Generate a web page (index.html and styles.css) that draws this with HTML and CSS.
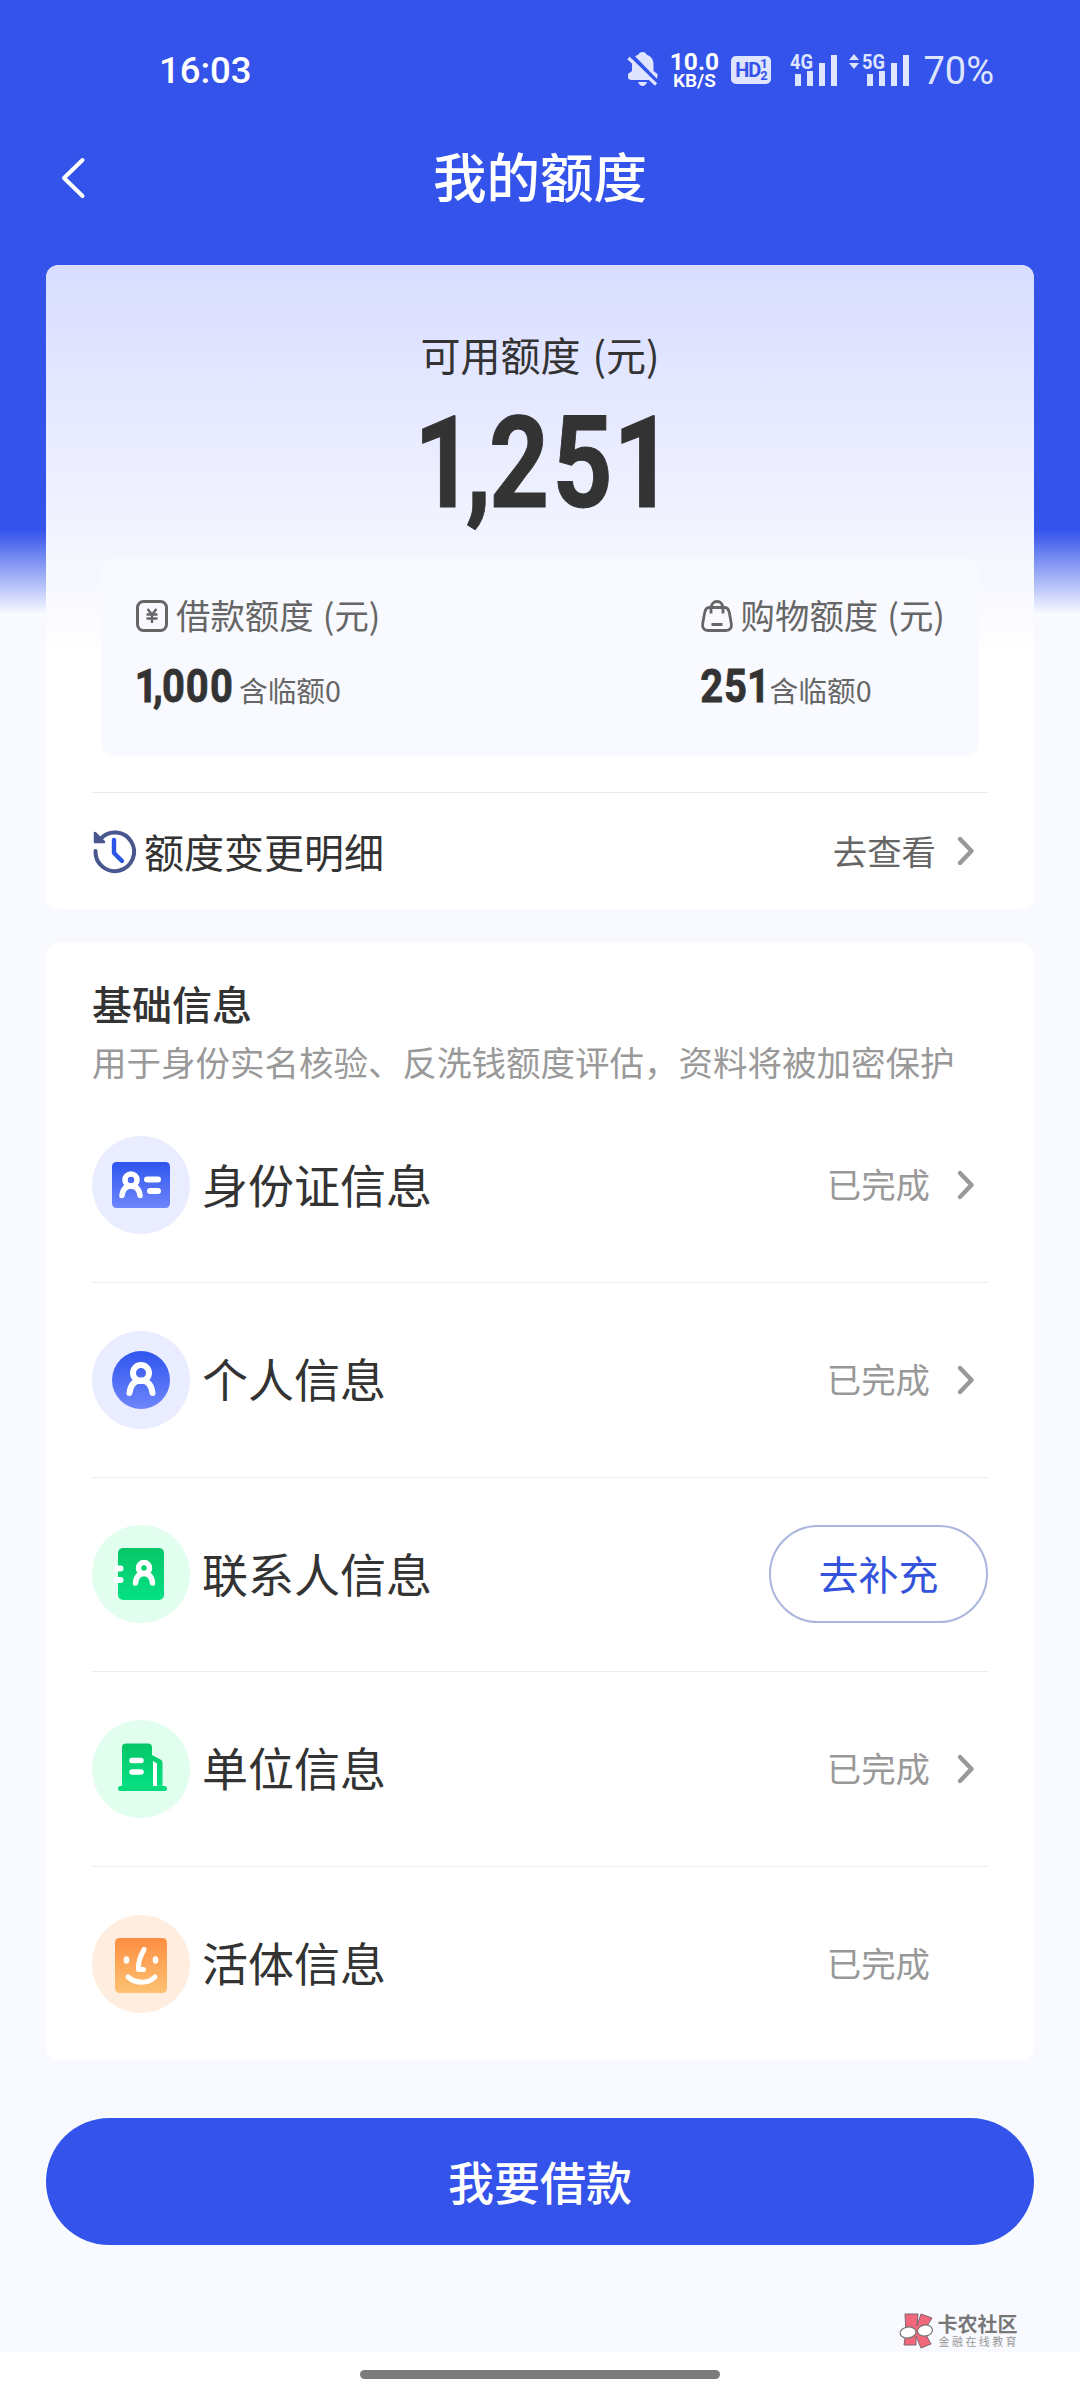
FILE: index.html
```html
<!DOCTYPE html>
<html lang="zh-CN">
<head>
<meta charset="utf-8">
<title>我的额度</title>
<link rel="stylesheet" href="styles.css">
</head>
<body>
<svg width="0" height="0" class="defs">
  <defs>
    <linearGradient id="blue" x1="0" y1="0" x2="0" y2="1"><stop offset="0" stop-color="#2f55ee"/><stop offset="1" stop-color="#6e86fc"/></linearGradient>
    <linearGradient id="green" x1="0" y1="0" x2="0" y2="1"><stop offset="0" stop-color="#06c667"/><stop offset="1" stop-color="#05e184"/></linearGradient>
    <linearGradient id="orange" x1="0" y1="0" x2="0" y2="1"><stop offset="0" stop-color="#fe8e42"/><stop offset="1" stop-color="#fdc272"/></linearGradient>
    <symbol id="chevron" viewBox="0 0 18 30"><path d="M3 3 14.500 15 3 27" fill="none" stroke="#999" stroke-width="4.400" stroke-linecap="round" stroke-linejoin="round"/></symbol>
  </defs>
</svg>
<div class="page">
  <header class="top">
    <div class="statusbar">
      <span class="time">16:03</span>
      <div class="indicators">
        <svg class="bell" width="32" height="34" viewBox="0 0 32 34"><path d="M5 28h22c2.500 0 3.500-1.500 3.500-4v-2l-4-3v-7c0-5-3-8-7-9.500C19 1 17.500 0 15.500 0S12 1 11.500 2.500C7 4 5 7 5 12v7L1 22v3c0 2 1 3 4 3z" fill="#dfe4ff"/><path d="M11 30h9c-.8 2.500-2.500 4-4.500 4S12 32.500 11 30z" fill="#dfe4ff"/><path d="M3 2 33 33" stroke="#3453eb" stroke-width="4"/><path d="M0 3.500V10l4 3V7z" fill="#3453eb"/><path d="M1.500 6 29 32.500" stroke="#dfe4ff" stroke-width="3.200"/></svg>
        <div class="speed"><span class="rate">10.0</span><span class="unit">KB/S</span></div>
        <div class="hd"><span class="hd-label">HD</span><span class="hd-nums"><i>1</i><i>2</i></span></div>
        <svg class="signal4" width="48" height="34" viewBox="0 0 48 34"><text class="net" x="0" y="17" textLength="23" lengthAdjust="spacingAndGlyphs">4G</text><path d="M5 22h6v12H5zM17 19h6v15h-6zM29 11h6v23h-6zM41 3h6v31h-6z" fill="#dfe4ff"/></svg>
        <svg class="signal5" width="61" height="34" viewBox="0 0 61 34"><path d="M0 8 5 2 10 8zM0 11h10L5 17z" fill="#dfe4ff"/><text class="net" x="13" y="17" textLength="23" lengthAdjust="spacingAndGlyphs">5G</text><path d="M18 22h6v12h-6zM30 19h6v15h-6zM42 11h6v23h-6zM54 3h6v31h-6z" fill="#dfe4ff"/></svg>
        <span class="battery">70%</span>
      </div>
    </div>
    <div class="navbar">
      <svg class="back" width="26" height="42" viewBox="0 0 26 42"><path d="M22.500 3 4 21 22.500 39" fill="none" stroke="#fff" stroke-width="4" stroke-linecap="round" stroke-linejoin="round"/></svg>
      <h1>我的额度</h1>
    </div>
  </header>

  <main>
    <section class="card quota">
      <p class="quota-label">可用额度 (元)</p>
      <svg class="total" width="244" height="110" viewBox="0 0 244 110"><text transform="scale(.82 1)" x="-5 58 86.500 164 238" y="96">1,251</text></svg>
      <div class="split">
        <div class="part">
          <div class="part-name"><svg width="32" height="32" viewBox="0 0 32 32" fill="none" stroke="#666"><rect x="1.500" y="1.500" width="29" height="29" rx="6" stroke-width="3"/><path d="m11.500 9 4.500 5.500L20.500 9M16 14v9M10.500 14.500h11M10.500 18.500h11" stroke-width="2.400"/></svg><span>借款额度 (元)</span></div>
          <div class="part-value"><svg width="97" height="44" viewBox="0 0 97 44"><text transform="scale(.85 1)" x="-1.400 20 30.500 58.500 87" y="35">1,000</text></svg><span>含临额0</span></div>
        </div>
        <div class="part">
          <div class="part-name"><svg width="32" height="32" viewBox="0 0 32 32" fill="none" stroke="#666"><path d="M8 7.500h16c2.500 0 3.500 1.500 4.300 5l2 11c.8 4.500-1.500 7-5.300 7H7c-3.800 0-6.100-2.500-5.300-7l2-11c.8-3.500 1.800-5 4.300-5z" stroke-width="2.800"/><path d="M10 13.500V8.500C10 4 12.500 1.500 16 1.500s6 2.500 6 7v5M10.500 24.500h11" stroke-width="2.800"/></svg><span>购物额度 (元)</span></div>
          <div class="part-value"><svg width="63" height="44" viewBox="0 0 63 44"><text transform="scale(.85 1)" x="-1 27 54" y="35">251</text></svg><span>含临额0</span></div>
        </div>
      </div>
      <div class="history">
        <svg width="44" height="44" viewBox="0 0 44 44" fill="none"><path d="M3.500 22A19.300 19.300 0 1 0 8.500 9.800" stroke="#48588f" stroke-width="4" stroke-linecap="round"/><path d="M3 4v9h9z" fill="#48588f" stroke="#48588f" stroke-width="2.500" stroke-linejoin="round"/><path d="M22 11v13l8 8" stroke="#2c55e8" stroke-width="4.400" stroke-linecap="round" stroke-linejoin="round"/></svg>
        <span class="history-name">额度变更明细</span>
        <span class="history-go">去查看</span>
        <svg class="chev" width="18" height="30"><use href="#chevron"/></svg>
      </div>
    </section>

    <section class="card info">
      <h2>基础信息</h2>
      <p class="hint">用于身份实名核验、反洗钱额度评估，资料将被加密保护</p>
      <ul>
        <li>
          <svg class="ico" viewBox="0 0 98 98" fill="none" stroke="#fff" stroke-linecap="round"><circle cx="49" cy="49" r="49" fill="#e9edff" stroke="none"/><rect x="20" y="26" width="58" height="46" rx="4.500" fill="url(#blue)" stroke="none"/><circle cx="39" cy="44" r="6" stroke-width="5.500"/><path d="M30 59.500c.8-6 4-9.500 9-9.500s8.200 3.500 9 9.500" stroke-width="5.500"/><path d="M55 43.500h11M58 55h8" stroke-width="6"/></svg>
          <span class="name">身份证信息</span><span class="state">已完成</span><svg class="chev" width="18" height="30"><use href="#chevron"/></svg>
        </li>
        <li>
          <svg class="ico" viewBox="0 0 98 98" fill="none" stroke="#fff" stroke-linecap="round"><circle cx="49" cy="49" r="49" fill="#e9edff" stroke="none"/><circle cx="49" cy="49" r="29" fill="url(#blue)" stroke="none"/><circle cx="49" cy="42" r="8" stroke-width="6"/><path d="M37.500 62c1-8 5-12.500 11.500-12.500S59.500 54 60.500 62" stroke-width="6"/></svg>
          <span class="name">个人信息</span><span class="state">已完成</span><svg class="chev" width="18" height="30"><use href="#chevron"/></svg>
        </li>
        <li>
          <svg class="ico" viewBox="0 0 98 98" fill="none" stroke="#fff" stroke-linecap="round"><circle cx="49" cy="49" r="49" fill="#e1feee" stroke="none"/><rect x="26" y="23" width="46" height="52" rx="5" fill="url(#green)" stroke="none"/><circle cx="52" cy="43" r="5.500" stroke-width="5.500"/><path d="M43.500 58c.6-5.500 3.300-9.500 8.500-9.500s7.900 4 8.500 9.500" stroke-width="5.500"/><path d="M24.500 43.500h4M24.500 55h4" stroke-width="6"/></svg>
          <span class="name">联系人信息</span><button class="fill">去补充</button>
        </li>
        <li>
          <svg class="ico" viewBox="0 0 98 98" fill="none" stroke-linecap="round"><circle cx="49" cy="49" r="49" fill="#e1feee"/><path d="M30 69V27.500a4 4 0 0 1 4-4H56a4 4 0 0 1 4 4V35l8.500 4.500a3.500 3.500 0 0 1 2 3.200V69z" fill="url(#green)"/><path d="M28.500 68.500h44" stroke="#05da7d" stroke-width="5"/><path d="M61 41v25h4V43.500z" fill="#fff"/><path d="M40 40.500h9M40 52h9" stroke="#fff" stroke-width="5.500"/></svg>
          <span class="name">单位信息</span><span class="state">已完成</span><svg class="chev" width="18" height="30"><use href="#chevron"/></svg>
        </li>
        <li>
          <svg class="ico" viewBox="0 0 98 98" fill="none" stroke="#fff" stroke-linecap="round" stroke-linejoin="round"><circle cx="49" cy="49" r="49" fill="#ffeedf" stroke="none"/><rect x="23" y="23" width="52" height="55" rx="4.500" fill="url(#orange)" stroke="none"/><path d="M34.500 44v2M63.500 44v2" stroke-width="5.500"/><path d="M52 34.500c-4 7-6 14-5.500 20h5M36 62c8 7 20 7 27 0" stroke-width="5"/></svg>
          <span class="name">活体信息</span><span class="state last">已完成</span>
        </li>
      </ul>
    </section>

    <button class="borrow">我要借款</button>

    <div class="brand">
      <svg width="36" height="36" viewBox="0 0 36 36"><path d="M6 1h13l-1 12 4-12 11 4-8 13 7 13-10 4-5-12v9H5l2-13z" fill="#f26779" stroke="#7c6470" stroke-width="1"/><ellipse cx="9" cy="19.500" rx="8" ry="5.500" fill="#fff" stroke="#777" stroke-width="1.200" transform="rotate(-8 9 19.500)"/><ellipse cx="26" cy="17.500" rx="7.500" ry="5.500" fill="#fff" stroke="#777" stroke-width="1.200" transform="rotate(-8 26 17.500)"/></svg>
      <div class="brand-text"><b>卡农社区</b><span>金融在线教育</span></div>
    </div>
  </main>
  <footer class="gesture"><span></span></footer>
</div>
</body>
</html>
```
FILE: styles.css
```css
* { box-sizing: border-box; margin: 0; padding: 0; }
body { font-family: "Noto Sans CJK SC", sans-serif; color: #333; }
.defs { position: absolute; }
svg { display: block; flex: none; overflow: visible; }
button { font: inherit; border: 0; display: block; }
ul { list-style: none; }
.page {
  width: 1080px; height: 2400px; display: flex; flex-direction: column; overflow: hidden;
  background: linear-gradient(#3453eb 0, #3453eb 530px, #f9faff 614px);
}
.top { height: 265px; color: #fff; }
.statusbar { height: 120px; padding: 48px 86px 0 159px; display: flex; justify-content: space-between; }
.time { font: 500 36.500px/45px Roboto, sans-serif; }
.indicators { display: flex; align-items: flex-start; padding-top: 4px; color: #dfe4ff; font-family: Roboto, sans-serif; }
.speed { width: 48px; margin-left: 11px; display: flex; flex-direction: column; align-items: center; color: #fff; }
.rate { font-size: 24.500px; line-height: 19px; font-weight: 700; }
.unit { font-size: 19px; line-height: 16px; margin-top: 2px; font-weight: 600; }
.hd { width: 40px; height: 28px; margin: 4px 0 0 13px; border-radius: 5px; background: #dfe4ff; color: #3453eb; display: flex; justify-content: center; align-items: center; }
.hd-label { font-size: 20px; font-weight: 700; letter-spacing: -1px; }
.hd-nums { display: flex; flex-direction: column; }
.hd-nums i { font: 700 13px/12px Roboto, sans-serif; }
.signal4 { margin-left: 19px; }
.signal5 { margin-left: 11px; }
.net { font: 700 21px Roboto, sans-serif; fill: #dfe4ff; }
.battery { font-size: 38px; line-height: 39px; margin-left: 13px; }
.navbar { height: 116px; padding: 0 60px; display: grid; grid-template-columns: 26px 1fr 26px; align-items: center; }
.back { margin-top: -1px; }
h1 { font-size: 53.500px; line-height: 64px; font-weight: 500; text-align: center; margin-top: -6px; }

main { flex: 1; padding: 0 46px; display: flex; flex-direction: column; }
.card { background: #fff; border-radius: 12px; }
.quota { height: 644px; padding: 65px 46px 0; background: linear-gradient(#d8ddff 0, #f2f4ff 270px, #fff 390px); display: flex; flex-direction: column; }
.quota-label { font-size: 40px; line-height: 48px; text-align: center; word-spacing: 3px; }
.total { align-self: center; margin-top: 33px; }
.total text { font: 700 128px Roboto, sans-serif; fill: #333; stroke: #333; stroke-width: 1px; }
.split { height: 197px; margin: 38px 9px 0; padding: 35px 34px 0 35px; border-radius: 12px; background: #f9faff; display: flex; justify-content: space-between; color: #666; }
.part-name { display: flex; align-items: center; gap: 8px; height: 44px; font-size: 34.400px; line-height: 44px; word-spacing: 1.500px; }
.part-name span { margin-top: -4px; }
.part-value { display: flex; align-items: flex-start; gap: 6px; margin-top: 29px; font-size: 28.700px; line-height: 44px; }
.part-value text { font: 700 47px Roboto, sans-serif; fill: #333; stroke: #333; stroke-width: .8px; }
.part-value span { margin-top: 1px; }
.history { height: 117px; margin-top: 36px; border-top: 1.500px solid #ebebeb; display: flex; align-items: center; padding-right: 13px; }
.history-name { font-size: 40px; margin: -1px 0 0 8px; }
.history-go { font-size: 34.400px; color: #666; margin: -3px 0 0 auto; }
.chev { margin-left: 21px; }

.info { height: 1117px; margin-top: 34px; padding: 35px 46px 0; }
h2 { font-size: 40px; line-height: 50px; font-weight: 500; }
.hint { font-size: 34.500px; line-height: 50px; margin-top: 8px; color: #999; white-space: nowrap; }
ul { margin-top: 2.500px; }
li { height: 194.500px; display: flex; align-items: center; border-bottom: 1.500px solid #eee; padding-right: 13px; }
li:last-child { border-bottom: 0; }
li .chev { margin-left: 27px; }
.ico { width: 98px; height: 98px; }
.name { font-size: 46px; line-height: 60px; margin: -5px 0 0 12px; }
.state { margin: -4px 0 0 auto; font-size: 34.400px; color: #999; }
.state.last { margin-right: 45px; }
.fill { margin-left: auto; margin-right: -13px; width: 219px; height: 98px; padding-bottom: 3px; border: 2px solid #aab6de; border-radius: 49px; background: #fff; color: #3453db; font-size: 40px; }
.borrow { width: 988px; height: 127px; margin-top: 58px; padding-bottom: 4px; border-radius: 64px; background: #3453eb; color: #fff; font-size: 46px; font-weight: 500; }
.brand { display: flex; align-self: flex-end; margin: 68px 15px 0 0; gap: 3px; color: #777; }
.brand-text { display: flex; flex-direction: column; margin-top: 1px; }
.brand b { font-size: 20px; line-height: 20px; font-weight: 700; }
.brand-text span { font-size: 11px; line-height: 14px; letter-spacing: 2.400px; color: #999; margin-left: 1px; }
.gesture { height: 48px; background: #fff; display: flex; justify-content: center; padding-top: 18px; }
.gesture span { width: 360px; height: 9px; border-radius: 5px; background: #7b7b7b; }
```
